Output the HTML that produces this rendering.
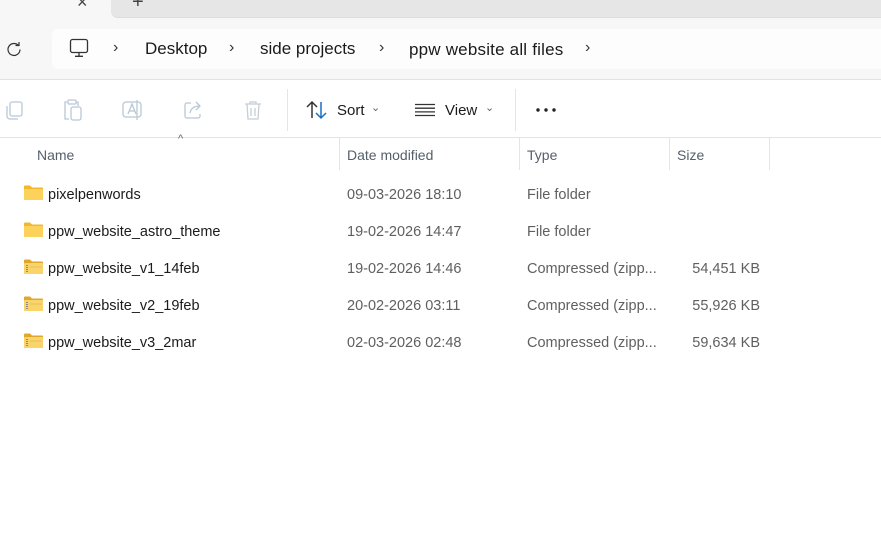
<!DOCTYPE html>
<html><head><meta charset="utf-8"><style>
*{margin:0;padding:0;box-sizing:border-box}
body{width:881px;height:544px;overflow:hidden;background:#fff;font-family:"Liberation Sans",sans-serif;position:relative;color:#1b1b1b}
.abs{position:absolute}
.t{position:absolute;white-space:nowrap}
</style></head><body>
<div class="abs" style="left:0;top:0;width:881px;height:80px;background:#f7f7f7"></div>
<div class="abs" style="left:111px;top:0;width:770px;height:18px;background:#e6e6e6;border-bottom-left-radius:7px;border-bottom:1px solid #dcdcdc"></div>
<div class="abs" style="left:0;top:0;width:111px;height:19px;background:#f7f7f7"></div>
<div class="t" style="left:77px;top:-8px;font-size:18px;color:#444">×</div>
<div class="t" style="left:132px;top:-9px;font-size:20px;color:#444">+</div>
<div class="abs" style="left:52px;top:29px;width:829px;height:40px;background:#fdfdfd;border-radius:6px 0 0 6px"></div>
<div class="abs" style="left:0;top:79px;width:881px;height:1px;background:#e3e3e3"></div>
<svg class="abs" style="left:5px;top:40px" width="18" height="18" viewBox="0 0 18 18"><path d="M13.5 5.5A6 6 0 1 0 15 9.5" fill="none" stroke="#333" stroke-width="1.2"/><path d="M10.5 5.5h3.5V2" fill="none" stroke="#333" stroke-width="1.2"/></svg>
<svg class="abs" style="left:69px;top:38px" width="20" height="20" viewBox="0 0 20 20"><rect x="1.5" y="1.5" width="17" height="13" rx="2" fill="none" stroke="#333" stroke-width="1.3"/><path d="M10 15v3M6 18.3h8" stroke="#333" stroke-width="1.3"/></svg>
<div class="t" style="left:113px;top:39px;font-size:16px;color:#333">›</div>
<div class="t" style="left:145px;top:39px;font-size:17px">Desktop</div>
<div class="t" style="left:229px;top:39px;font-size:16px;color:#333">›</div>
<div class="t" style="left:260px;top:39px;font-size:17px">side projects</div>
<div class="t" style="left:379px;top:39px;font-size:16px;color:#333">›</div>
<div class="t" style="left:409px;top:40px;font-size:17px;letter-spacing:0.2px">ppw website all files</div>
<div class="t" style="left:585px;top:39px;font-size:16px;color:#333">›</div>
<svg class="abs" style="left:3px;top:99px" width="22" height="22" viewBox="0 0 22 22" fill="none" stroke="#b9c8d6" stroke-width="1.3"><rect x="7" y="3" width="12" height="14" rx="2"/><path d="M4 7v10a3 3 0 0 0 3 3h8"/></svg>
<svg class="abs" style="left:62px;top:98px" width="22" height="24" viewBox="0 0 22 24" fill="none" stroke="#b9c8d6" stroke-width="1.3"><path d="M5 4H3v17h4"/><rect x="6" y="2" width="8" height="4" rx="1"/><path d="M14 4h2v4"/><rect x="9" y="9" width="10" height="13" rx="2"/></svg>
<svg class="abs" style="left:121px;top:99px" width="24" height="22" viewBox="0 0 24 22" fill="none" stroke="#b9c8d6" stroke-width="1.3"><rect x="2" y="3" width="18" height="15" rx="3"/><path d="M7 15l4-10 4 10M8.5 12h5M16 1v20"/></svg>
<svg class="abs" style="left:182px;top:99px" width="22" height="22" viewBox="0 0 22 22" fill="none" stroke="#b9c8d6" stroke-width="1.3"><path d="M9 4H5a2 2 0 0 0-2 2v11a2 2 0 0 0 2 2h11a2 2 0 0 0 2-2v-2"/><path d="M8 14c1-5 5-7 10-7M14 3l4 4-4 4"/></svg>
<svg class="abs" style="left:242px;top:99px" width="22" height="22" viewBox="0 0 22 22" fill="none" stroke="#c6ced6" stroke-width="1.3"><path d="M3 5h16M8 5V3h6v2M5 5l1 15h10l1-15M9 9v8M13 9v8"/></svg>
<div class="abs" style="left:287px;top:89px;width:1px;height:42px;background:#e5e5e5"></div>
<svg class="abs" style="left:305px;top:100px" width="24" height="20" viewBox="0 0 24 20" fill="none" stroke-width="1.5"><path d="M7 18V2M2 7l5-5 5 5" stroke="#333"/><path d="M16 2v16M11 13l5 5 5-5" stroke="#1a6fc6"/></svg>
<div class="t" style="left:337px;top:102px;font-size:15px">Sort</div>
<div class="t" style="left:371px;top:101px;font-size:11px;color:#666">⌄</div>
<svg class="abs" style="left:414px;top:103px" width="22" height="14" viewBox="0 0 22 14" stroke="#333" stroke-width="1.3"><path d="M1 1.5h20M1 5.2h20M1 8.9h20M1 12.5h20"/></svg>
<div class="t" style="left:445px;top:102px;font-size:15px">View</div>
<div class="t" style="left:485px;top:101px;font-size:11px;color:#666">⌄</div>
<div class="abs" style="left:515px;top:89px;width:1px;height:42px;background:#e5e5e5"></div>
<svg class="abs" style="left:535px;top:106px" width="24" height="8"><circle cx="3" cy="4" r="1.7" fill="#222"/><circle cx="11" cy="4" r="1.7" fill="#222"/><circle cx="19" cy="4" r="1.7" fill="#222"/></svg>
<div class="abs" style="left:0;top:137px;width:881px;height:1px;background:#e3e3e3"></div>
<div class="t" style="left:178px;top:133px;font-size:11px;color:#666">^</div>
<div class="t" style="left:37px;top:147px;font-size:14px;color:#555f6b">Name</div>
<div class="abs" style="left:339px;top:138px;width:1px;height:32px;background:#e5e5e5"></div>
<div class="t" style="left:347px;top:147px;font-size:14px;color:#555f6b">Date modified</div>
<div class="abs" style="left:519px;top:138px;width:1px;height:32px;background:#e5e5e5"></div>
<div class="t" style="left:527px;top:147px;font-size:14px;color:#555f6b">Type</div>
<div class="abs" style="left:669px;top:138px;width:1px;height:32px;background:#e5e5e5"></div>
<div class="t" style="left:677px;top:147px;font-size:14px;color:#555f6b">Size</div>
<div class="abs" style="left:769px;top:138px;width:1px;height:32px;background:#e5e5e5"></div>
<div style="position:absolute;left:0;top:180px;font-size:14.5px">
<div style="position:relative;height:37px">
<svg class="abs" style="left:24px;top:5px" width="19" height="15" viewBox="0 0 19 15"><path d="M0 1.5a1 1 0 0 1 1-1h5l2 2h10a1 1 0 0 1 1 1V14a1 1 0 0 1-1 1H1a1 1 0 0 1-1-1z" fill="#f0b82a"/><rect x="0" y="4" width="19" height="11" rx="1" fill="#fcd25a"/></svg>
<span class="t" style="left:48px;top:7px">pixelpenwords</span><span class="t" style="left:347px;top:7px;color:#5f5f5f">09-03-2026 18:10</span><span class="t" style="left:527px;top:7px;color:#5f5f5f">File folder</span></div>
<div style="position:relative;height:37px">
<svg class="abs" style="left:24px;top:5px" width="19" height="15" viewBox="0 0 19 15"><path d="M0 1.5a1 1 0 0 1 1-1h5l2 2h10a1 1 0 0 1 1 1V14a1 1 0 0 1-1 1H1a1 1 0 0 1-1-1z" fill="#f0b82a"/><rect x="0" y="4" width="19" height="11" rx="1" fill="#fcd25a"/></svg>
<span class="t" style="left:48px;top:7px">ppw_website_astro_theme</span><span class="t" style="left:347px;top:7px;color:#5f5f5f">19-02-2026 14:47</span><span class="t" style="left:527px;top:7px;color:#5f5f5f">File folder</span></div>
<div style="position:relative;height:37px">
<svg class="abs" style="left:24px;top:5px" width="19" height="15" viewBox="0 0 19 15"><path d="M0 1.5a1 1 0 0 1 1-1h5l2 2h10a1 1 0 0 1 1 1V14a1 1 0 0 1-1 1H1a1 1 0 0 1-1-1z" fill="#e0a82a"/><rect x="0" y="4" width="19" height="11" rx="1" fill="#f9d46a"/><path d="M3 6v8" stroke="#8a8a8a" stroke-width="2" stroke-dasharray="1 1"/><path d="M6 8h12" stroke="#e8c050"/></svg>
<span class="t" style="left:48px;top:7px">ppw_website_v1_14feb</span><span class="t" style="left:347px;top:7px;color:#5f5f5f">19-02-2026 14:46</span><span class="t" style="left:527px;top:7px;color:#5f5f5f">Compressed (zipp...</span><span class="t" style="right:-760px;top:7px;color:#5f5f5f">54,451 KB</span></div>
<div style="position:relative;height:37px">
<svg class="abs" style="left:24px;top:5px" width="19" height="15" viewBox="0 0 19 15"><path d="M0 1.5a1 1 0 0 1 1-1h5l2 2h10a1 1 0 0 1 1 1V14a1 1 0 0 1-1 1H1a1 1 0 0 1-1-1z" fill="#e0a82a"/><rect x="0" y="4" width="19" height="11" rx="1" fill="#f9d46a"/><path d="M3 6v8" stroke="#8a8a8a" stroke-width="2" stroke-dasharray="1 1"/><path d="M6 8h12" stroke="#e8c050"/></svg>
<span class="t" style="left:48px;top:7px">ppw_website_v2_19feb</span><span class="t" style="left:347px;top:7px;color:#5f5f5f">20-02-2026 03:11</span><span class="t" style="left:527px;top:7px;color:#5f5f5f">Compressed (zipp...</span><span class="t" style="right:-760px;top:7px;color:#5f5f5f">55,926 KB</span></div>
<div style="position:relative;height:37px">
<svg class="abs" style="left:24px;top:5px" width="19" height="15" viewBox="0 0 19 15"><path d="M0 1.5a1 1 0 0 1 1-1h5l2 2h10a1 1 0 0 1 1 1V14a1 1 0 0 1-1 1H1a1 1 0 0 1-1-1z" fill="#e0a82a"/><rect x="0" y="4" width="19" height="11" rx="1" fill="#f9d46a"/><path d="M3 6v8" stroke="#8a8a8a" stroke-width="2" stroke-dasharray="1 1"/><path d="M6 8h12" stroke="#e8c050"/></svg>
<span class="t" style="left:48px;top:7px">ppw_website_v3_2mar</span><span class="t" style="left:347px;top:7px;color:#5f5f5f">02-03-2026 02:48</span><span class="t" style="left:527px;top:7px;color:#5f5f5f">Compressed (zipp...</span><span class="t" style="right:-760px;top:7px;color:#5f5f5f">59,634 KB</span></div>
</div>
</body></html>
